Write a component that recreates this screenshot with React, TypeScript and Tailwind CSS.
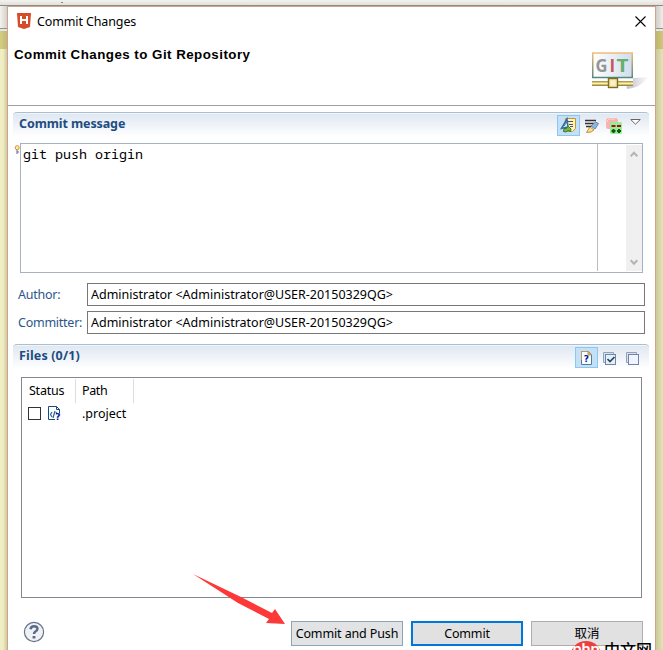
import type { ReactNode } from "react";

const ui = "font-['Noto_Sans','Noto_Sans_CJK_SC',sans-serif]";

function Backdrop({ side }: { side: "left" | "right" }) {
  const left = side === "left";
  return (
    <div className="flex w-[7px] shrink-0 flex-col">
      <div className={`h-[22px] ${left ? "bg-linear-to-r from-[#f5f3ee] to-[#d3d1cc]" : "bg-linear-to-r from-[#d0cec9] to-[#efeeea]"}`} />
      <div className="h-px bg-[#929292]" />
      <div className="h-[2px] bg-[#e7e5df]" />
      <div className={`h-[18px] ${left ? "bg-linear-to-r from-[#d5cd80] to-[#c0b978]" : "bg-linear-to-r from-[#bdb66d] to-[#cec77b]"}`} />
      <div className={`flex-1 ${left ? "bg-linear-to-r from-[#f0eec2] from-40% to-[#cdcba6]" : "bg-linear-to-r from-[#c9c99c] to-[#e4e4b4]"}`} />
    </div>
  );
}

function SectionHeader({ title, children, label }: { title: ReactNode; children: ReactNode; label: string }) {
  return (
    <div className="mr-[6px] ml-[5px] flex h-[25px] shrink-0 justify-between rounded-t-[4px] border-t border-[#a9bfd4] bg-linear-to-b from-[#dfe7f1] to-white pr-[5px] pl-[6px] shadow-[inset_0_1px_0_#f1f5f9]">
      <h2 className={`h-[22px] whitespace-nowrap text-[12.5px] leading-[22px] font-bold text-[#1d4c82] ${label}`}>{title}</h2>
      <div className="flex h-[25px]">{children}</div>
    </div>
  );
}

function Person({ label, space }: { label: string; space: string }) {
  return (
    <div className="flex h-[23px] shrink-0 pr-[10px] pl-[10px]">
      <label className={`w-[69px] whitespace-nowrap text-[12.5px] leading-[24px] text-[#2b568b] ${space}`}>{label}</label>
      <div className="h-[23px] flex-1 whitespace-nowrap border border-[#777] pl-[3px] text-[12.5px] leading-[22px]">
        Administrator &lt;Administrator@USER-20150329QG&gt;
      </div>
    </div>
  );
}

function HLogo() {
  return (
    <svg width="14" height="16" viewBox="0 0 14 16">
      <path d="M0 0h14l-1 14-6 2-6-2z" fill="#d84b29" />
      <path d="M4 3v8M10 3v8M4 7h6" stroke="#fff" strokeWidth="2" fill="none" />
    </svg>
  );
}

function GitLogo() {
  return (
    <svg width="57" height="39" viewBox="0 0 57 39">
      <defs>
        <linearGradient id="screen" x2="1"><stop stopColor="#fff" /><stop offset="1" stopColor="#d0ddeb" /></linearGradient>
        <linearGradient id="edge" x2="0" y2="1"><stop stopColor="#f1bd79" /><stop offset="1" stopColor="#56877f" /></linearGradient>
        <linearGradient id="cable" x2="0" y2="1"><stop stopColor="#9b893b" /><stop offset=".5" stopColor="#fff1a8" /><stop offset="1" stopColor="#867423" /></linearGradient>
        <linearGradient id="shade" x2="1"><stop stopColor="#aaa7b6" /><stop offset="1" stopColor="#fff" /></linearGradient>
      </defs>
      <path d="M35 37Q48 36 57 25L41 26v5h-7z" fill="url(#shade)" opacity=".75" />
      <rect x=".75" y="1" width="39.5" height="24.5" fill="url(#screen)" stroke="url(#edge)" strokeWidth="1.5" />
      <text x="3.5" y="20" fontFamily="Open Sans, sans-serif" fontWeight="700" fontSize="17" fill="#959595" textLength="12" lengthAdjust="spacingAndGlyphs">G</text>
      <text x="17.5" y="20" fontFamily="Open Sans, sans-serif" fontWeight="700" fontSize="17" fill="#c7595c">I</text>
      <text x="24.5" y="20" fontFamily="Open Sans, sans-serif" fontWeight="700" fontSize="17" fill="#66ad70" textLength="12" lengthAdjust="spacingAndGlyphs">T</text>
      <rect y="29" width="41" height="5" fill="url(#cable)" />
      <path d="M18 26v3M23 26v3" stroke="#8c7940" />
      <rect x="16.5" y="26.5" width="9" height="9" fill="#f4e6a0" stroke="#806d25" strokeWidth="1.4" />
      <rect x="18.5" y="28.5" width="5" height="5" fill="#faf2c8" />
    </svg>
  );
}

function SignIcon() {
  return (
    <svg width="17" height="17" viewBox="0 0 17 17">
      <path d="M5.5 1.5H15.5V11.5l-3 3h-8z" fill="#fff2b4" stroke="#bd9740" />
      <path d="M8 4.5h5M9 7.5h4M10 9.5h3" stroke="#425471" />
      <path d="M1.5 11.5L7 2l1 8z" fill="#d7eaff" stroke="#36699b" strokeWidth="1.5" />
      <path d="M4 9l3-4" stroke="#3979ae" />
      <path d="M3.5 14.5l.5-3 2.500 0 1.500-2.500 3 3-.500 2.500-2.500-1-2 1.500z" fill="#73b84d" stroke="#397735" />
    </svg>
  );
}

function AmendIcon() {
  return (
    <svg width="14" height="15" viewBox="0 0 14 15">
      <path d="M0 1.500h11M0 4.500h9M1 7.500h5" stroke="#333" strokeWidth="1.300" />
      <path d="M10.500 3l3 1.500-3.500 5.500-4-3z" fill="#91b5dd" stroke="#6381ae" />
      <path d="M5 8l4 3-3 2-4.500.500z" fill="#ffe091" stroke="#c98e37" />
    </svg>
  );
}

function ChangeIcon() {
  return (
    <svg width="16" height="16" viewBox="0 0 16 16">
      <rect width="12" height="11" rx="2.5" fill="#f6b3b1" />
      <path d="M1 4V3l2-2h6" stroke="#ffd6cf" fill="none" />
      <rect x="4" y="4" width="12" height="12" rx="2" fill="#96ed92" />
      <path d="M5.500 8h4M11 8h4" stroke="#a90c20" strokeWidth="2" />
      <path d="M5.500 13h4M7.500 11v4M11 13h4M13 11v4" stroke="#17521c" strokeWidth="2" />
    </svg>
  );
}

function UnknownFile() {
  return (
    <svg width="11" height="14" viewBox="0 0 11 14">
      <path d="M.5.5h7L10.5 3.5v10H.5z" fill="#f7fcff" stroke="#5c7895" />
      <path d="M.5 9V.5h6.500" fill="none" stroke="#b99b5c" />
      <path d="M7 .5v3.500h3.500z" fill="#d8b778" stroke="#c49b4f" />
      <text x="2.7" y="11" fill="#001b9e" fontFamily="DejaVu Sans" fontSize="9" fontWeight="bold">?</text>
    </svg>
  );
}

function Boxes({ checked = false }: { checked?: boolean }) {
  return (
    <svg width="13" height="13" viewBox="0 0 13 13">
      <path d="M2 10.5H.5V.5h10V2" fill="none" stroke="#92a1b9" />
      <path d="M1.5 10V1.5H10" fill="none" stroke="#d0e6f2" />
      <rect x="2.5" y="2.5" width="10" height="10" fill={checked ? "#dff2f8" : "#eff4ff"} stroke="#7482aa" />
      {checked && <path d="M4.5 7l2.5 2.5L11.5 5" fill="none" stroke="#35435c" strokeWidth="1.7" />}
    </svg>
  );
}

function ProjectIcon() {
  return (
    <svg width="13" height="15" viewBox="0 0 13 15">
      <path d="M7 13.5H.5V.5h8l3 3v4M8.5.5v3h3" fill="none" stroke="#174b7d" />
      <path d="M4 6L2.5 8.5 4 11M7 5l-2 7M8 6l1 2" fill="none" stroke="#28679c" strokeWidth="1.2" />
      <text x="7.2" y="14" fill="#0011aa" fontFamily="DejaVu Sans" fontSize="9" fontWeight="bold">?</text>
    </svg>
  );
}

function Chevron({ down = false }: { down?: boolean }) {
  return (
    <svg width="8" height="7" viewBox="0 0 8 7">
      <path d={down ? "M.7 1.2L4 4.8l3.300-3.600" : "M.7 5.300L4 1.700l3.300 3.600"} fill="none" stroke="#b4b4b4" strokeWidth="2" />
    </svg>
  );
}

export default function App() {
  return (
    <main className={`relative flex h-[650px] w-[663px] flex-col overflow-hidden bg-[#f4f2ed] text-black ${ui}`}>
      <div className="flex h-[5px] shrink-0 items-start bg-linear-to-b from-[#f4f2ed] to-[#e2e0db]">
        <i className="mt-[2px] ml-[61px] h-px w-[2px] bg-[#888]" />
      </div>
      <div className="h-px shrink-0 bg-[#8c8b88]" />
      <div className="flex min-h-0 flex-1">
        <Backdrop side="left" />
        <section className="flex w-[649px] shrink-0 flex-col border border-b-0 border-[#d4a286] bg-white">
          <header className="flex h-[99px] shrink-0 flex-col border-b border-[#a0a0a0]">
            <div className="flex h-[30px] shrink-0 pt-[6px] pr-[9px] pl-[9px]">
              <HLogo />
              <span className="ml-[6px] h-[18px] whitespace-nowrap text-[12.5px] leading-[17px] tracking-[-0.12px]">Commit Changes</span>
              <svg className="mt-[3px] ml-auto" width="11" height="11" viewBox="0 0 11 11"><path d="M.5.5l10 10M10.5.5l-10 10" stroke="#000" strokeWidth="1.1" /></svg>
            </div>
            <div className="flex justify-between pl-[6px]">
              <h1 className="mt-[9px] h-[20px] whitespace-nowrap font-['Liberation_Sans',sans-serif] text-[13.33px] leading-[18px] font-bold tracking-[0.47px]">Commit Changes to Git Repository</h1>
              <div className="mt-[15px] mr-[6px]"><GitLogo /></div>
            </div>
          </header>
          <div className="h-[6px] shrink-0" />
          <SectionHeader title="Commit message" label="tracking-[-0.1px]">
            <div className="mt-[2px] flex h-[21px] w-[23px] items-center justify-center border border-[#8bc6f5] bg-[#c4e0f7]"><SignIcon /></div>
            <div className="mt-[6px] ml-[5px]"><AmendIcon /></div>
            <div className="mt-[5px] ml-[7px]"><ChangeIcon /></div>
            <svg className="mt-[6px] ml-[8px]" width="11" height="6" viewBox="0 0 11 6"><path d="M.7.5h9.6L5.5 5.2z" fill="#fff" stroke="#656565" /></svg>
            <span className="w-[3px]" />
          </SectionHeader>
          <div className="mt-[6px] flex h-[130px] shrink-0 pr-[12px]">
            <div className="w-[12px] shrink-0 pt-[2px] pl-[6px]">
              <svg width="6" height="9" viewBox="0 0 6 9"><circle cx="3.2" cy="2.7" r="2" fill="#fff1a8" stroke="#d28b32" /><path d="M2 6h2v2H2" fill="none" stroke="#596c91" /></svg>
            </div>
            <div className="flex flex-1 border border-[#a7b1bf]">
              <div className="h-[127px] w-[577px] border-r border-[#bcbcbc] pt-px pl-[2px] font-['Noto_Sans_Mono','DejaVu_Sans_Mono',monospace] text-[13.33px] leading-[19px]">git push origin</div>
              <div className="mt-px ml-auto flex h-[126px] w-[16px] flex-col items-center justify-between bg-[#f0f0f0] pt-[6px] pb-[5px]"><Chevron /><Chevron down /></div>
            </div>
          </div>
          <div className="mt-[10px] flex shrink-0 flex-col gap-[5px]">
            <Person label="Author:" space="tracking-[-0.25px]" />
            <Person label="Committer:" space="tracking-[-0.25px]" />
          </div>
          <div className="h-[10px] shrink-0" />
          <SectionHeader title="Files (0/1)" label="tracking-[0.15px]">
            <div className="mt-[2px] flex h-[21px] w-[23px] items-center justify-center border border-[#8bc6f5] bg-[#c4e0f7]"><UnknownFile /></div>
            <div className="mt-[7px] ml-[5px]"><Boxes checked /></div>
            <div className="mt-[7px] ml-[10px]"><Boxes /></div>
            <span className="w-[5px]" />
          </SectionHeader>
          <div className="mt-[8px] mr-[13px] ml-[13px] h-[221px] shrink-0 border border-[#828790] text-[12.5px]">
            <div className="mt-px flex h-[24px]">
              <div className="w-[54px] border-r border-[#ddd] pl-[7px] leading-[24px] tracking-[-0.25px]">Status</div>
              <div className="w-[58px] border-r border-[#ddd] pl-[6px] leading-[24px] tracking-[-0.4px]">Path</div>
            </div>
            <div className="flex h-[23px] items-start">
              <div className="mt-[4px] ml-[6px] h-[13px] w-[13px] border border-[#333]" />
              <div className="mt-[3px] ml-[7px] w-[34px]"><ProjectIcon /></div>
              <span className="leading-[21px]">.project</span>
            </div>
          </div>
          <footer className="mt-[23px] flex h-[29px] shrink-0 text-[12.5px]">
            <svg className="ml-[15px] shrink-0" width="22" height="22" viewBox="0 0 22 22">
              <circle cx="11" cy="11" r="9.6" fill="#f0f1f3" stroke="#65758f" strokeWidth="1.2" />
              <path d="M7.5 8.2Q8 5.3 11 5.3Q14.7 5.3 14.4 8Q14.3 9.5 12.5 10.5Q11 11.3 11 13" fill="none" stroke="#586b89" strokeWidth="2.5" />
              <path d="M9.6 15h2.8v2.5H9.6z" fill="#586b89" />
            </svg>
            <button className="ml-[246px] h-[25px] w-[112px] border border-[#90a3b5] bg-[#e1e3e5] leading-[23px] tracking-[-0.12px] whitespace-nowrap">Commit and Push</button>
            <button className="ml-[8px] h-[25px] w-[112px] border-2 border-[#0078d7] bg-[#e1e1e1] leading-[21px] tracking-[-0.15px]">Commit</button>
            <button className="ml-[8px] h-[25px] w-[112px] border border-[#adadad] bg-[#e1e1e1] leading-[23px]">取消</button>
          </footer>
        </section>
        <Backdrop side="right" />
      </div>
      <svg className="pointer-events-none absolute top-[570px] left-[190px]" width="98" height="58" viewBox="190 570 98 58">
        <path d="M193 574L241 597L272 613L275 609L285 624L266 623L269 619L238 603Z" fill="#fc3938" />
      </svg>
      <div className="absolute top-[641px] left-[571px] flex h-[9px] w-[92px] overflow-hidden">
        <div className="h-[27px] w-[30px] shrink-0 rounded-[50%] bg-[#ed403e] text-center font-['Lato',sans-serif] text-[16px] leading-[14px] font-bold text-white">php</div>
        <span className="ml-[3px] whitespace-nowrap text-[16px] leading-[19px] font-medium">中文网</span>
      </div>
    </main>
  );
}
